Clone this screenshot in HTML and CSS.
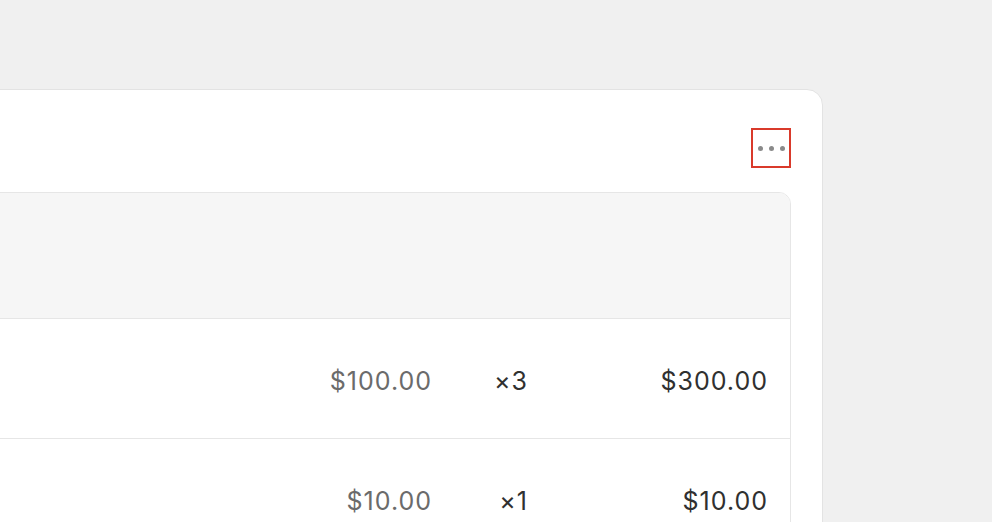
FILE: index.html
```html
<!DOCTYPE html>
<html>
<head>
<meta charset="utf-8">
<link rel="stylesheet" href="styles.css">
</head>
<body>
<div class="card">
  <div class="card-head">
    <button class="more" aria-label="More actions">
      <span class="dot"></span><span class="dot"></span><span class="dot"></span>
    </button>
  </div>
  <div class="table-box">
    <div class="thead"></div>
    <div class="row">
      <span class="cell price">$100.00</span>
      <span class="cell qty">×3</span>
      <span class="cell total">$300.00</span>
    </div>
    <div class="row">
      <span class="cell price">$10.00</span>
      <span class="cell qty">×1</span>
      <span class="cell total">$10.00</span>
    </div>
  </div>
</div>
</body>
</html>
```
FILE: styles.css
```css
html, body {
  margin: 0;
  padding: 0;
  background: #f0f0f0;
  font-family: Inter, "Noto Sans", sans-serif;
  overflow: hidden;
  height: 522px;
}
.card {
  margin-top: 89px;
  margin-left: -200px;
  width: 1023px;
  box-sizing: border-box;
  background: #fff;
  border: 1px solid #e3e3e3;
  border-radius: 16px;
  padding: 38px 31px 40px 31px;
}
.card-head {
  display: flex;
  justify-content: flex-end;
  height: 40px;
  margin-bottom: 24px;
}
.more {
  width: 40px;
  height: 40px;
  box-sizing: border-box;
  border: 2px solid #d93a2b;
  background: #fff;
  border-radius: 0;
  padding: 0;
  display: flex;
  align-items: center;
  justify-content: center;
  gap: 6px;
}
.dot {
  width: 5px;
  height: 5px;
  border-radius: 50%;
  background: #8a8a8a;
}
.table-box {
  border: 1px solid #e6e6e6;
  border-radius: 12px;
  overflow: hidden;
}
.thead {
  height: 125px;
  background: #f6f6f6;
  border-bottom: 1px solid #e6e6e6;
}
.row {
  height: 120px;
  box-sizing: border-box;
  padding-top: 4px;
  border-bottom: 1px solid #e6e6e6;
  display: flex;
  align-items: center;
  justify-content: flex-end;
  padding-right: 22px;
  font-size: 25px;
  letter-spacing: 1px;
  color: #303030;
}
.cell { text-align: right; }
.price { color: #6b6b6b; }
.qty { width: 96px; }
.total { width: 240px; }
```
